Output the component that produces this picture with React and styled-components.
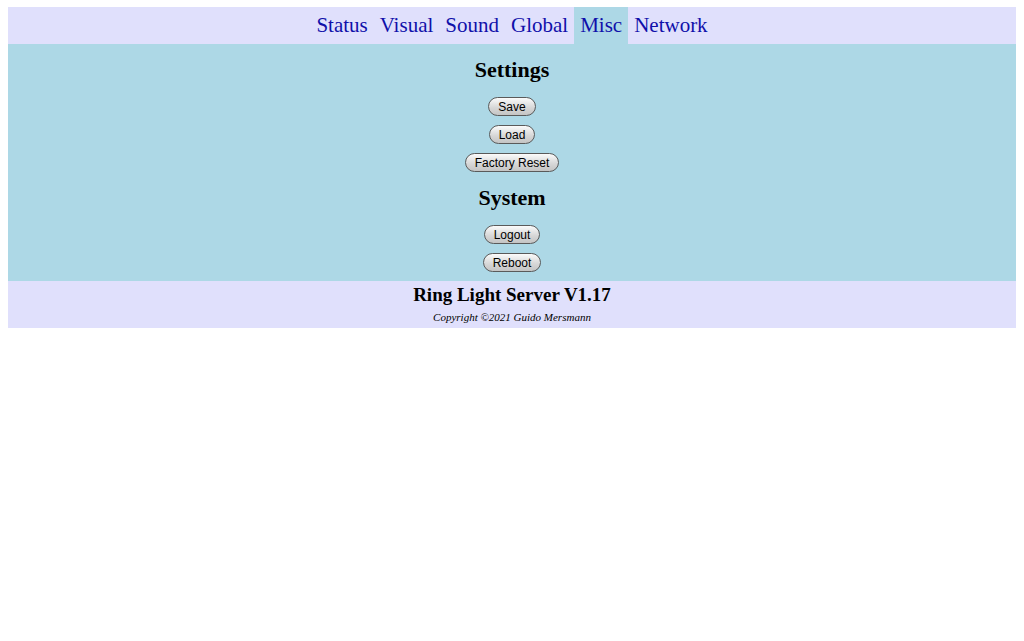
import styled, { createGlobalStyle } from 'styled-components';

const GlobalStyle = createGlobalStyle`
  body {
    margin: 7px 8px 8px;
    font-family: "Liberation Serif", "Times New Roman", serif;
    background: white;
  }
`;

const Nav = styled.nav`
  display: flex;
  justify-content: center;
  background-color: #e0e0fc;
  height: 37px;
`;

const Tab = styled.a`
  display: flex;
  align-items: center;
  padding: 0 6px 1px;
  font-size: 21px;
  color: #1010aa;
  text-decoration: none;
  background-color: ${p => (p.$active ? '#add8e6' : 'transparent')};
`;

const Main = styled.section`
  background-color: #add8e6;
  display: flex;
  flex-direction: column;
  align-items: center;
  padding: 12px 0 9px;
`;

const Heading = styled.h2`
  margin: 0;
  font-size: 22px;
  line-height: 28px;
  font-weight: bold;
  color: #000;
`;

const Buttons = styled.div`
  display: flex;
  flex-direction: column;
  align-items: center;
  gap: 9px;
  margin: 13px 0 12px;

  &:last-child {
    margin-bottom: 0;
  }
`;

const Button = styled.button`
  height: 19px;
  padding: 0 9px;
  border: 1px solid #5a5a5a;
  border-radius: 10px;
  background: linear-gradient(#fbfbfb, #d8d8d8 55%, #c4c4c4);
  font-family: "Liberation Sans", Arial, sans-serif;
  font-size: 12px;
  color: #000;
  cursor: pointer;
`;

const Footer = styled.footer`
  background-color: #e0e0fc;
  text-align: center;
  padding: 2px 0 4px;
`;

const Title = styled.h3`
  margin: 0;
  font-size: 19px;
  line-height: 24px;
  font-weight: bold;
`;

const Copy = styled.p`
  margin: 3px 0 0;
  font-size: 11px;
  line-height: 14px;
  font-style: italic;
`;

const tabs = ['Status', 'Visual', 'Sound', 'Global', 'Misc', 'Network'];

export default function App() {
  return (
    <>
      <GlobalStyle />
      <Nav>
        {tabs.map(t => (
          <Tab key={t} href="#" $active={t === 'Misc'}>{t}</Tab>
        ))}
      </Nav>
      <Main>
        <Heading>Settings</Heading>
        <Buttons>
          <Button>Save</Button>
          <Button>Load</Button>
          <Button>Factory Reset</Button>
        </Buttons>
        <Heading>System</Heading>
        <Buttons>
          <Button>Logout</Button>
          <Button>Reboot</Button>
        </Buttons>
      </Main>
      <Footer>
        <Title>Ring Light Server V1.17</Title>
        <Copy>Copyright ©2021 Guido Mersmann</Copy>
      </Footer>
    </>
  );
}
